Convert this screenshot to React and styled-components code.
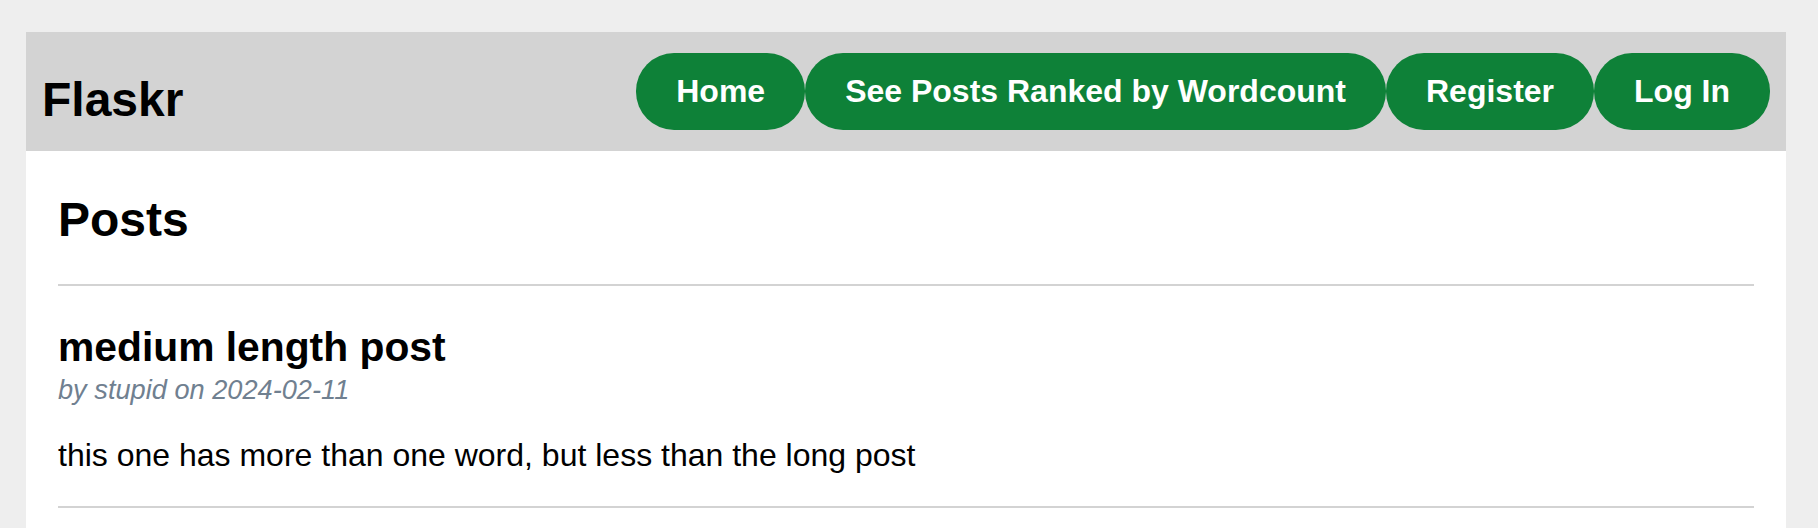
import React from 'react';
import styled, { createGlobalStyle } from 'styled-components';

const colors = {
  page: '#eeeeee',
  nav: '#d3d3d3',
  rule: '#d3d3d3',
  button: '#0e8138',
  meta: '#708090',
};

const GlobalStyle = createGlobalStyle`
  html, body {
    margin: 0;
    padding: 0;
    background: ${colors.page};
    overflow: hidden;
    font-family: "Liberation Sans", Arial, Helvetica, sans-serif;
    font-size: 32px;
    color: #000;
  }
`;

const Page = styled.div`
  box-sizing: border-box;
  min-height: 100vh;
  padding: 32px 32px 0 26px;
`;

const Sheet = styled.div`
  background: #fff;
  min-height: calc(100vh - 32px);
`;

// barra de navegação superior
const Nav = styled.nav`
  display: flex;
  align-items: center;
  background: ${colors.nav};
  padding: 21px 16px;
`;

const Brand = styled.h1`
  flex: auto;
  margin: 16px 0 0;
  font-size: 48px;
  font-weight: bold;
`;

const NavList = styled.ul`
  display: flex;
  list-style: none;
  margin: 0;
  padding: 0;
`;

const NavLink = styled.a`
  display: block;
  padding: 20px 40px;
  border-radius: 38px;
  background: ${colors.button};
  color: #fff;
  font-size: 32px;
  font-weight: bold;
  text-decoration: none;
  white-space: nowrap;
`;

const Content = styled.section`
  padding: 0 32px 32px;
`;

const PageHeader = styled.header`
  border-bottom: 2px solid ${colors.rule};
`;

const PageTitle = styled.h1`
  margin: 41px 0 37px;
  font-size: 48px;
  font-weight: bold;
`;

const Post = styled.article`
  padding-top: 38px;
`;

const PostTitle = styled.h1`
  margin: 0;
  font-size: 40.8px;
  font-weight: bold;
`;

const About = styled.div`
  margin-top: 3px;
  font-size: 27.2px;
  font-style: italic;
  color: ${colors.meta};
`;

const PostBody = styled.p`
  margin: 31px 0 32px;
  white-space: pre-line;
`;

const Rule = styled.hr`
  margin: 0;
  border: none;
  border-top: 2px solid ${colors.rule};
`;

const links = ['Home', 'See Posts Ranked by Wordcount', 'Register', 'Log In'];

const posts = [
  {
    title: 'medium length post',
    author: 'stupid',
    created: '2024-02-11',
    body: 'this one has more than one word, but less than the long post',
  },
];

function App() {
  return (
    <>
      <GlobalStyle />
      <Page>
        <Sheet>
          <Nav>
            <Brand>Flaskr</Brand>
            <NavList>
              {links.map((label) => (
                <li key={label}>
                  <NavLink href="#">{label}</NavLink>
                </li>
              ))}
            </NavList>
          </Nav>
          <Content>
            <PageHeader>
              <PageTitle>Posts</PageTitle>
            </PageHeader>
            {posts.map((post) => (
              <React.Fragment key={post.title}>
                <Post>
                  <header>
                    <PostTitle>{post.title}</PostTitle>
                    <About>
                      by {post.author} on {post.created}
                    </About>
                  </header>
                  <PostBody>{post.body}</PostBody>
                </Post>
                <Rule />
              </React.Fragment>
            ))}
          </Content>
        </Sheet>
      </Page>
    </>
  );
}

export default App;
